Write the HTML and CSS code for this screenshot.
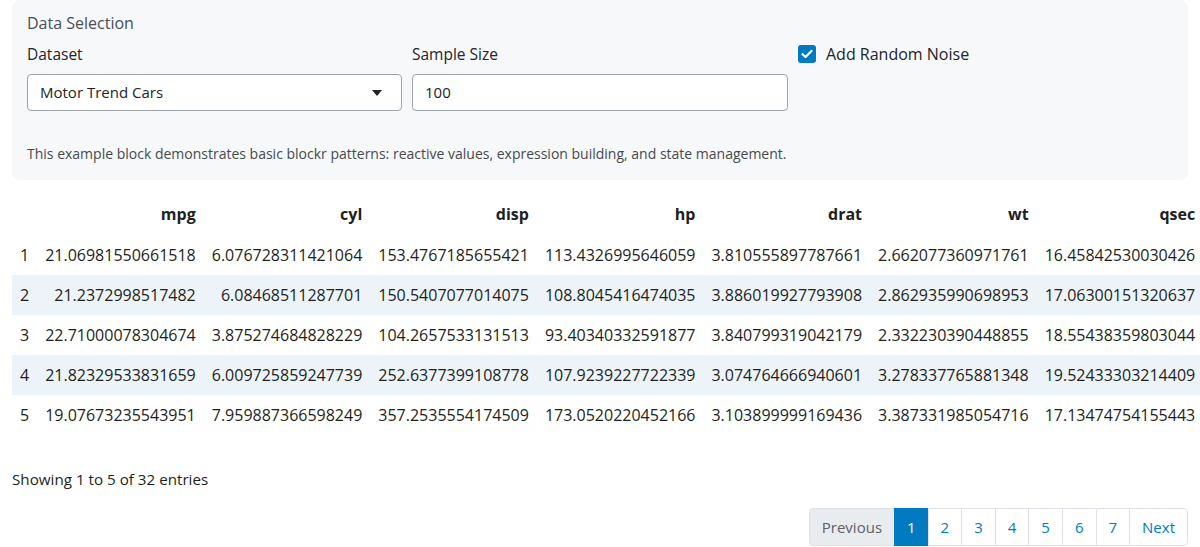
FILE: index.html
```html
<!DOCTYPE html>
<html>
<head>
<meta charset="utf-8">
<link rel="stylesheet" href="styles.css">
</head>
<body>
<div class="page">
  <div class="card">
    <div class="card-title">Data Selection</div>
    <div class="fields">
      <div class="field">
        <label class="label">Dataset</label>
        <div class="select">
          <span>Motor Trend Cars</span>
          <svg class="caret" width="10" height="6" viewBox="0 0 10 6"><path d="M0 0 L10 0 L5 6 Z" fill="#212529"/></svg>
        </div>
      </div>
      <div class="field">
        <label class="label">Sample Size</label>
        <div class="input">100</div>
      </div>
      <div class="field">
        <div class="check-row">
          <span class="checkbox">
            <svg width="12" height="10" viewBox="0 0 12 10"><path d="M1.5 5.2 L4.5 8 L10.5 2" fill="none" stroke="#fff" stroke-width="2.2" stroke-linecap="round" stroke-linejoin="round"/></svg>
          </span>
          <span class="check-label">Add Random Noise</span>
        </div>
      </div>
    </div>
    <p class="desc">This example block demonstrates basic blockr patterns: reactive values, expression building, and state management.</p>
  </div>

  <div class="table-wrap">
    <table class="data">
      <thead>
        <tr><th></th><th>mpg</th><th>cyl</th><th>disp</th><th>hp</th><th>drat</th><th>wt</th><th>qsec</th></tr>
      </thead>
      <tbody>
        <tr><td class="idx">1</td><td>21.06981550661518</td><td>6.076728311421064</td><td>153.4767185655421</td><td>113.4326995646059</td><td>3.810555897787661</td><td>2.662077360971761</td><td>16.45842530030426</td></tr>
        <tr class="odd"><td class="idx">2</td><td>21.2372998517482</td><td>6.08468511287701</td><td>150.5407077014075</td><td>108.8045416474035</td><td>3.886019927793908</td><td>2.862935990698953</td><td>17.06300151320637</td></tr>
        <tr><td class="idx">3</td><td>22.71000078304674</td><td>3.875274684828229</td><td>104.2657533131513</td><td>93.40340332591877</td><td>3.840799319042179</td><td>2.332230390448855</td><td>18.55438359803044</td></tr>
        <tr class="odd"><td class="idx">4</td><td>21.82329533831659</td><td>6.009725859247739</td><td>252.6377399108778</td><td>107.9239227722339</td><td>3.074764666940601</td><td>3.278337765881348</td><td>19.52433303214409</td></tr>
        <tr><td class="idx">5</td><td>19.07673235543951</td><td>7.959887366598249</td><td>357.2535554174509</td><td>173.0520220452166</td><td>3.103899999169436</td><td>3.387331985054716</td><td>17.13474754155443</td></tr>
      </tbody>
    </table>
  </div>

  <div class="info">Showing 1 to 5 of 32 entries</div>

  <div class="pager-row">
    <ul class="pager">
      <li class="pg disabled">Previous</li>
      <li class="pg active">1</li>
      <li class="pg">2</li>
      <li class="pg">3</li>
      <li class="pg">4</li>
      <li class="pg">5</li>
      <li class="pg">6</li>
      <li class="pg">7</li>
      <li class="pg last">Next</li>
    </ul>
  </div>
</div>
</body>
</html>
```

FILE: styles.css
```css
html, body {
  margin: 0;
  padding: 0;
  overflow: hidden;
  background: #fff;
}
body {
  font-family: "Open Sans", "Liberation Sans", sans-serif;
  color: #1d1f21;
  width: 1200px;
  height: 547px;
}
.page {
  padding: 0 12px;
}
.card {
  background: #f7f8fa;
  border-radius: 8px;
  padding: 12px 15px 16px 15px;
}
.card-title {
  font-size: 16px;
  line-height: 23px;
  color: #4a4f55;
}
.fields {
  display: grid;
  grid-template-columns: 375px 376px 1fr;
  column-gap: 10px;
  margin-top: 8px;
}
.field {
  display: flex;
  flex-direction: column;
}
.label {
  font-size: 15.5px;
  line-height: 22px;
  color: #212529;
  margin-bottom: 9px;
}
.select, .input {
  box-sizing: border-box;
  height: 37px;
  border: 1px solid #9ea4aa;
  border-radius: 4px;
  background: #fff;
  font-size: 15px;
  line-height: 35px;
  padding: 0 12px;
  color: #212529;
  display: flex;
  align-items: center;
}
.select {
  justify-content: space-between;
}
.caret {
  margin-right: 7px;
}
.check-row {
  display: flex;
  align-items: center;
  height: 22px;
}
.checkbox {
  width: 18px;
  height: 18px;
  border-radius: 3px;
  background: #007bc2;
  display: flex;
  align-items: center;
  justify-content: center;
  margin-right: 10px;
}
.check-label {
  font-size: 16px;
  color: #212529;
}
.desc {
  margin: 33px 0 0 0;
  font-size: 14px;
  line-height: 20px;
  color: #454a50;
}
.table-wrap {
  margin: 14px -12px 0 0;
  overflow: hidden;
}
.data {
  border-collapse: collapse;
  font-size: 16px;
  color: #1d1f21;
  white-space: nowrap;
}
.data th {
  font-weight: 700;
  text-align: right;
  padding: 8px 8px;
  height: 25px;
  line-height: 25px;
}
.data td {
  text-align: right;
  padding: 0 8px;
  height: 40px;
  line-height: 24px;
}
.data td.idx {
  text-align: left;
}
.data tr.odd td {
  background: #edf4f9;
}
.info {
  margin-top: 33px;
  font-size: 15.2px;
  line-height: 22px;
  color: #1d1f21;
}
.pager-row {
  display: flex;
  justify-content: flex-end;
  margin-top: 18px;
}
.pager {
  display: flex;
  list-style: none;
  margin: 0;
  padding: 0;
}
.pg {
  box-sizing: border-box;
  height: 38px;
  padding: 6px 12px;
  font-size: 15px;
  line-height: 24px;
  color: #007bc2;
  background: #fff;
  border: 1px solid #dee2e6;
  margin-left: -1px;
}
.pg.disabled {
  background: #e9ecef;
  color: #5c6166;
  border-radius: 4px 0 0 4px;
  margin-left: 0;
}
.pg.active {
  background: #007bc2;
  border-color: #007bc2;
  color: #fff;
}
.pg.last {
  border-radius: 0 4px 4px 0;
}
```
